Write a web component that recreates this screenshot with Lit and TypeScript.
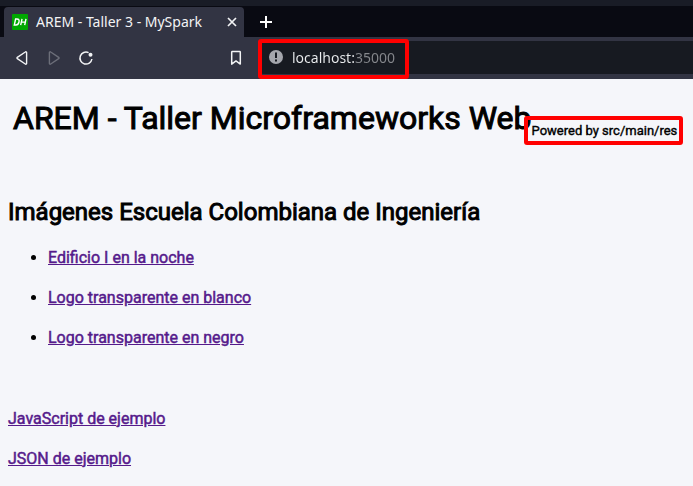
import { LitElement, html, css } from "lit";
import { customElement } from "lit/decorators.js";

@customElement("browser-chrome")
class BrowserChrome extends LitElement {
  static styles = css`
    :host { display: block; font-family: "Noto Sans", sans-serif; color: #f2f3f5; }
    button { display: grid; place-items: center; flex: none; margin: 0; padding: 0; border: 0; background: none; color: inherit; }
    svg { display: block; }
    .tabs { display: flex; background: #090a12; border-top: 6px solid #191c26; padding: 1px 0 0 4px; height: 30px; }
    .tab { display: flex; align-items: center; width: 240px; box-sizing: border-box; padding: 0 5px 0 8px; background: #323443; border-radius: 4px 4px 0 0; }
    .favicon { flex: none; margin-right: 8px; }
    .title { flex: 1; font-size: 14px; line-height: 20px; white-space: nowrap; }
    .close { width: 14px; height: 14px; }
    .add { width: 44px; height: 30px; color: #fff; }
    .bar { display: flex; align-items: center; height: 41px; background: #323443; padding: 0 0 1px 6px; }
    .nav { width: 32px; height: 32px; }
    .nav:disabled { color: #6c6e79; }
    .mark { margin: 0 8px 0 118px; }
    .address { position: relative; flex: 1; display: flex; align-items: center; box-sizing: border-box; height: 33px; padding: 0 0 1px 9px; background: #171a21; border-radius: 4px 0 0 4px; }
    .address input {
      flex: 1; min-width: 0; height: 24px; margin-left: 9px; padding: 0; border: 0; outline: 0;
      font: 14px/20px "Noto Sans", sans-serif; color: transparent;
      background: linear-gradient(90deg, #eceef0 63px, #85878c 63px);
      -webkit-background-clip: text; background-clip: text;
    }
    .outline { position: absolute; left: -2px; top: -2px; width: 151px; height: 40px; box-sizing: border-box; border: 4px solid #f00; border-radius: 3px; pointer-events: none; }
  `;
  render() {
    return html`
      <div class="tabs">
        <div class="tab">
          <svg class="favicon" width="16" height="16" viewBox="0 0 16 16" aria-hidden="true">
            <rect width="16" height="16" rx="1" fill="#00a800"/>
            <path d="M3.600 5H5c2 0 2.400 1.300 2 3s-1.500 3-3 3H2.300zM10 4.800 8.700 11.200M14 4.800l-1.300 6.400M9.400 8.100h4" fill="none" stroke="#fff" stroke-width="1.400"/>
          </svg>
          <span class="title">AREM - Taller 3 - MySpark</span>
          <button class="close" aria-label="Cerrar pestaña">
            <svg width="14" height="14" viewBox="0 0 14 14"><path d="m3 3 8 8m0-8-8 8" stroke="currentColor" stroke-width="1.700"/></svg>
          </button>
        </div>
        <button class="add" aria-label="Nueva pestaña">
          <svg width="14" height="14" viewBox="0 0 14 14"><path d="M7 1v12M1 7h12" stroke="currentColor" stroke-width="2"/></svg>
        </button>
      </div>
      <div class="bar">
        <button class="nav" aria-label="Atrás">
          <svg width="16" height="16" viewBox="0 0 16 16"><path d="M12.600 2.600v10.800a.8.8 0 0 1-1.300.6L3.300 8.700a.8.8 0 0 1 0-1.300l8-5.400a.8.8 0 0 1 1.300.6z" fill="none" stroke="currentColor" stroke-width="1.400"/></svg>
        </button>
        <button class="nav" disabled aria-label="Adelante">
          <svg width="16" height="16" viewBox="0 0 16 16"><path d="M3.400 2.600v10.800a.8.8 0 0 0 1.300.6l8-5.300a.8.8 0 0 0 0-1.300l-8-5.400a.8.8 0 0 0-1.300.6z" fill="none" stroke="currentColor" stroke-width="1.400"/></svg>
        </button>
        <button class="nav" aria-label="Recargar">
          <svg width="16" height="16" viewBox="0 0 16 16"><path d="M10.600 2.700A6 6 0 1 0 13.900 9" fill="none" stroke="currentColor" stroke-width="1.500"/><circle cx="12.500" cy="4.700" r="2" fill="currentColor"/></svg>
        </button>
        <button class="nav mark" aria-label="Guardar en marcadores">
          <svg width="16" height="16" viewBox="0 0 16 16"><path d="M3.700 2.200q0-.6.600-.6h7.400q.6 0 .6.600v11.900L8 10.900l-4.300 3.200z" fill="none" stroke="currentColor" stroke-width="1.500" stroke-linejoin="round"/></svg>
        </button>
        <div class="address">
          <svg width="14" height="14" viewBox="0 0 14 14" aria-hidden="true"><circle cx="7" cy="7" r="7" fill="#a5a7ad"/><path d="M6 2.500h2v5.600H6zM6 9.400h2v2H6z" fill="#171a21"/></svg>
          <input type="text" aria-label="Dirección" value="localhost:35000" spellcheck="false">
          <span class="outline"></span>
        </div>
      </div>`;
  }
}

@customElement("app-root")
class AppRoot extends LitElement {
  static styles = css`
    :host { display: block; min-height: 100vh; background: #f5f6fa; color: #000; font-family: Roboto, sans-serif; overflow: hidden; }
    main { padding: 0 8px; font-size: 16px; line-height: 20px; }
    h1, h2 { font-weight: 400; margin: 0; -webkit-text-stroke: 1px; }
    header { display: flex; align-items: flex-start; padding: 20px 5px 0; white-space: nowrap; }
    h1 { font-size: 32px; line-height: 38px; }
    .powered { position: relative; margin-top: 24px; font-size: 13px; line-height: 16px; -webkit-text-stroke: 0.03em; }
    .powered::after { content: ""; position: absolute; inset: -7px -6px -6px -8px; border: 4px solid #f00; border-radius: 3px; }
    h2 { margin-top: 59px; font-size: 24px; line-height: 28px; }
    ul { display: grid; gap: 20px; margin: 22px 0 61px; padding-left: 40px; }
    a { color: #551a8b; text-decoration: underline; -webkit-text-stroke: 0.03em; }
    .samples { display: grid; gap: 20px; justify-items: start; padding-bottom: 16px; }
  `;
  private images = ["Edificio I en la noche", "Logo transparente en blanco", "Logo transparente en negro"];
  private samples = ["JavaScript de ejemplo", "JSON de ejemplo"];
  render() {
    return html`
      <browser-chrome></browser-chrome>
      <main>
        <header>
          <h1>AREM - Taller Microframeworks Web</h1>
          <span class="powered">Powered by src/main/res</span>
        </header>
        <h2>Imágenes Escuela Colombiana de Ingeniería</h2>
        <ul>${this.images.map((t) => html`<li><a href="#">${t}</a></li>`)}</ul>
        <div class="samples">${this.samples.map((t) => html`<a href="#">${t}</a>`)}</div>
      </main>`;
  }
}
